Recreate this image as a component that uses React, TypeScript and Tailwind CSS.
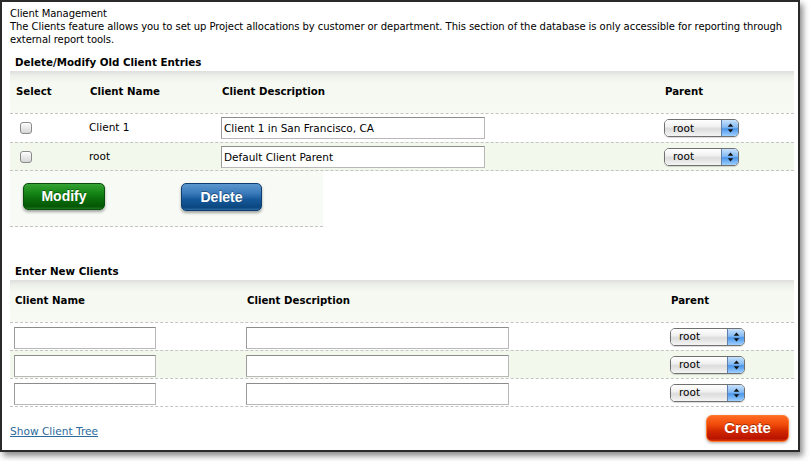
import React from "react";

const band =
  "bg-[linear-gradient(to_bottom,#dedede,#eef1ea_5px,#f6f9f2_12px,#f7faf3)]";
const dash = "border-dashed border-[#c4c4c4]";

function Checkbox() {
  return (
    <div className="w-[12px] h-[12px] rounded-[3px] border border-[#8a8a8a] bg-[linear-gradient(#fdfdfd,#e9e9e9_50%,#d6d6d6)] shadow-[inset_0_1px_0_#fff]" />
  );
}

function PopUp({ value }: { value: string }) {
  return (
    <div className="flex w-[75px] h-[18px] rounded-[5px] border border-[#707070] overflow-hidden shadow-[0_1px_1px_rgba(0,0,0,0.15)]">
      <div className="flex-1 flex items-center pl-[8px] text-[10.5px] leading-none bg-[linear-gradient(#ffffff,#f1f1f1_40%,#dcdcdc_55%,#f4f4f4)]">
        {value}
      </div>
      <div className="w-[17px] flex items-center justify-center border-l border-[#5f7fa8] bg-[linear-gradient(#c6e1fc,#86bbf3_45%,#4b95ea_55%,#9fd0ff)]">
        <svg width="7" height="10" viewBox="0 0 7 10">
          <polygon points="3.5,0.5 6.3,3.8 0.7,3.8" fill="#111" />
          <polygon points="0.7,6.2 6.3,6.2 3.5,9.5" fill="#111" />
        </svg>
      </div>
    </div>
  );
}

function Field({ w, value = "" }: { w: string; value?: string }) {
  return (
    <input
      readOnly
      defaultValue={value}
      className={`${w} h-[22px] px-[2px] text-[10.5px] text-black bg-white border border-[#b8b8b8] border-t-[#8c8c8c] border-l-[#9c9c9c] outline-none`}
    />
  );
}

function Btn({ label, tone }: { label: string; tone: "green" | "blue" | "red" }) {
  const tones = {
    green:
      "w-[82px] h-[27px] text-[14px] rounded-[5px] border border-[#0b4d0b] bg-[linear-gradient(#34a234,#168716_35%,#0a6d0a_60%,#055705_90%,#1f7a1f)] shadow-[0_2px_3px_rgba(0,0,0,0.35)]",
    blue:
      "w-[81px] h-[28px] text-[14px] rounded-[5px] border border-[#0e3f6e] bg-[linear-gradient(#5b97cf,#3b7bbb_35%,#15589a_60%,#0b477f_90%,#2b6aa4)] shadow-[0_2px_3px_rgba(0,0,0,0.35)]",
    red:
      "w-[83px] h-[27px] text-[15px] rounded-[6px] border border-[#ff7a2a] bg-[linear-gradient(#ff6a22,#f04a0a_35%,#d22800_60%,#b81400_90%,#d83a08)] shadow-[0_1px_3px_rgba(0,0,0,0.35)]",
  };
  return (
    <div
      className={`${tones[tone]} flex items-center justify-center text-white font-bold font-['Liberation_Sans',Arial,sans-serif] [text-shadow:0_-1px_0_rgba(0,0,0,0.35)]`}
    >
      {label}
    </div>
  );
}

const oldClients = [
  { name: "Client 1", desc: "Client 1 in San Francisco, CA" },
  { name: "root", desc: "Default Client Parent" },
];

export default function App() {
  return (
    <div className="w-[810px] h-[461px] bg-white">
      <div className="w-[800px] h-[452px] border-2 border-[#2a2a2a] bg-white pl-[8px] pr-[4px] pt-[5px] shadow-[3px_4px_6px_rgba(0,0,0,0.45)] font-['DejaVu_Sans',Verdana,sans-serif] text-black">
        <div className="text-[10px] leading-[13px] tracking-[-0.06px]">
          Client Management
          <br />
          The Clients feature allows you to set up Project allocations by customer or department. This section of the
          database is only accessible for reporting through
          <br />
          external report tools.
        </div>

        {/* old entries */}
        <div className="mt-[10px] pl-[5px] text-[10.3px] leading-[13px] font-bold">Delete/Modify Old Client Entries</div>
        <div className={`mt-[2px] h-[42px] flex items-center text-[10.2px] font-bold ${band}`}>
          <div className="w-[79px] pl-[6px]">Select</div>
          <div className="w-[132px] pl-[1px]">Client Name</div>
          <div className="w-[443px] pl-[1px]">Client Description</div>
          <div className="flex-1 pl-[1px]">Parent</div>
        </div>
        {oldClients.map((c, i) => (
          <div
            key={c.name}
            className={`h-[29px] flex items-center text-[10.5px] border-t ${dash} ${
              i === 1 ? "border-b bg-[#f3f8ed]" : "bg-white"
            }`}
          >
            <div className="w-[79px] pl-[10px]">
              <Checkbox />
            </div>
            <div className="w-[132px]">{c.name}</div>
            <div className="w-[443px]">
              <Field w="w-[264px]" value={c.desc} />
            </div>
            <div className="flex-1">
              <PopUp value="root" />
            </div>
          </div>
        ))}
        <div className={`w-[313px] h-[56px] bg-[#f8faf5] border-b ${dash} flex items-start pt-[12px] pl-[13px] gap-[76px]`}>
          <Btn label="Modify" tone="green" />
          <Btn label="Delete" tone="blue" />
        </div>

        {/* new entries */}
        <div className="mt-[38px] pl-[5px] text-[10.3px] leading-[13px] font-bold">Enter New Clients</div>
        <div className={`mt-[2px] h-[42px] flex items-center text-[10.2px] font-bold ${band}`}>
          <div className="w-[236px] pl-[5px]">Client Name</div>
          <div className="w-[424px] pl-[1px]">Client Description</div>
          <div className="flex-1 pl-[1px]">Parent</div>
        </div>
        {[0, 1, 2].map((i) => (
          <div
            key={i}
            className={`flex items-center border-t ${dash} ${
              i === 2 ? "h-[29px] border-b" : "h-[28px]"
            } ${i === 1 ? "bg-[#f3f8ed]" : "bg-white"}`}
          >
            <div className="w-[236px] pl-[4px]">
              <Field w="w-[142px]" />
            </div>
            <div className="w-[424px]">
              <Field w="w-[263px]" />
            </div>
            <div className="flex-1">
              <PopUp value="root" />
            </div>
          </div>
        ))}

        <div className="flex justify-between items-start">
          <a href="#" className="mt-[18px] text-[10.6px] leading-[13px] text-[#2c6a9c] underline">
            Show Client Tree
          </a>
          <div className="mt-[8px] mr-[5px]">
            <Btn label="Create" tone="red" />
          </div>
        </div>
      </div>
    </div>
  );
}
